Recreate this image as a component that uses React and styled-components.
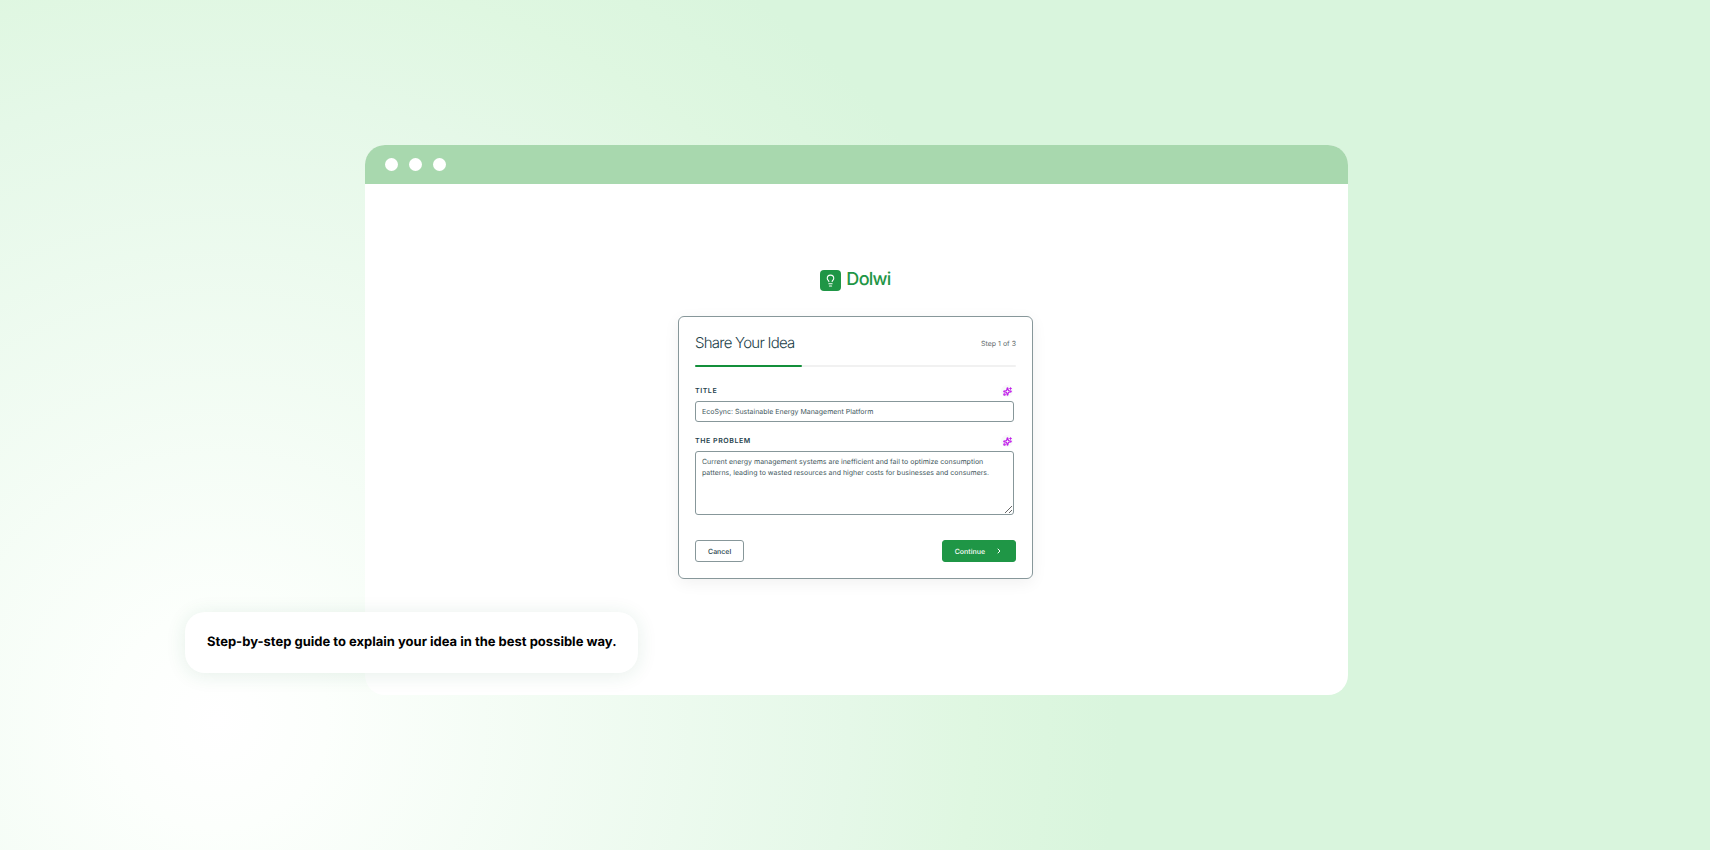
import { useState } from 'react';
import styled, { createGlobalStyle } from 'styled-components';
import { ChevronRight, Lightbulb, Sparkles } from 'lucide-react';

const GlobalStyle = createGlobalStyle`
  * {
    box-sizing: border-box;
  }

  body {
    margin: 0;
    font-family: Inter, 'Liberation Sans', sans-serif;
    text-rendering: geometricPrecision;
  }

  button,
  input,
  textarea {
    font-family: inherit;
    text-rendering: inherit;
  }
`;

const Page = styled.main`
  min-height: 100vh;
  display: flex;
  align-items: center;
  justify-content: center;
  padding: 0 0 10px 3px;
  background: radial-gradient(
    circle 900px at 218px 720px,
    #ffffff 0%,
    #fcfffc 12%,
    #e5f8e8 70%,
    #dff7e1 84%,
    #d9f5dd 100%
  );
`;

const BrowserWindow = styled.div`
  position: relative;
  width: 58%;
  max-width: 983px;
  min-width: 460px;
  border-radius: 20px;
  background: #ffffff;
`;

const TitleBar = styled.div`
  display: flex;
  align-items: center;
  gap: 11px;
  height: 39px;
  padding: 0 20px;
  border-radius: 20px 20px 0 0;
  background: #a8d8ae;
`;

const Dot = styled.span`
  width: 13px;
  height: 13px;
  border-radius: 50%;
  background: #ffffff;
`;

const Content = styled.div`
  display: flex;
  flex-direction: column;
  align-items: center;
  gap: 25px;
  padding: 85px 22px 116px 20px;
`;

const Logo = styled.div`
  display: flex;
  align-items: center;
  gap: 5px;
  color: #1f9646;
  font-size: 18px;
  font-weight: 500;
  line-height: 22px;
  letter-spacing: -0.04em;
`;

const LogoMark = styled.span`
  display: flex;
  align-items: center;
  justify-content: center;
  width: 21px;
  height: 21px;
  border-radius: 4px;
  background: #1f9646;
  color: #ffffff;
`;

const Card = styled.form`
  width: 355px;
  padding: 16px;
  border: 1px solid #87979a;
  border-radius: 6px;
  background: #ffffff;
  box-shadow: 0 4px 16px rgba(0, 0, 0, 0.06);
`;

const CardHeader = styled.div`
  display: flex;
  align-items: center;
  justify-content: space-between;
`;

const Heading = styled.h1`
  margin: 0;
  color: #24424a;
  font-size: 15px;
  font-weight: 300;
  line-height: 20px;
  letter-spacing: -0.05em;
`;

const StepCount = styled.span`
  color: #5f6b6e;
  font-size: 7px;
  line-height: 11px;
`;

const Track = styled.div`
  height: 2px;
  margin: 12px 0 18px;
  border-radius: 1px;
  background: #f1f1f1;
`;

const Progress = styled.div`
  height: 2px;
  border-radius: 1px;
  background: #138f3a;
`;

const Field = styled.div`
  margin-bottom: 13px;
  padding-right: 2px;
`;

const FieldHeader = styled.div`
  display: flex;
  align-items: center;
  justify-content: space-between;
  margin-bottom: 4px;
  padding-right: 1px;
`;

const Label = styled.label`
  color: #1f434d;
  font-size: 7px;
  font-weight: 600;
  line-height: 12px;
  letter-spacing: 0.08em;
  text-transform: uppercase;
`;

const SparkButton = styled.button`
  display: flex;
  align-items: center;
  justify-content: center;
  width: 12px;
  height: 12px;
  padding: 0;
  border: 0;
  border-radius: 50%;
  background: #f8faf9;
  color: #c01bea;
  cursor: pointer;
`;

const TextInput = styled.input`
  display: block;
  width: 100%;
  height: 21px;
  padding: 0 6px;
  border: 1px solid #87979a;
  border-radius: 3px;
  outline: none;
  background: #ffffff;
  color: #42575d;
  font-size: 7px;
`;

const TextArea = styled.textarea`
  display: block;
  width: 100%;
  height: 64px;
  padding: 4px 6px;
  border: 1px solid #87979a;
  border-radius: 3px;
  outline: none;
  background: #ffffff;
  color: #42575d;
  font-size: 7px;
  line-height: 11px;
  resize: vertical;
`;

const Actions = styled.div`
  display: flex;
  justify-content: space-between;
  padding-top: 12px;
`;

const Button = styled.button`
  display: flex;
  align-items: center;
  gap: 10px;
  height: 22px;
  padding: 0 12px;
  border: 1px solid ${({ $primary }) => ($primary ? '#1f9646' : '#87979a')};
  border-radius: 3px;
  background: ${({ $primary }) => ($primary ? '#1f9646' : '#ffffff')};
  color: ${({ $primary }) => ($primary ? '#ffffff' : '#24424a')};
  font-size: 7px;
  font-weight: 500;
  cursor: pointer;
`;

// Hangs over the lower left corner of the window
const Caption = styled.p`
  position: absolute;
  left: -180px;
  bottom: 22px;
  margin: 0;
  padding: 20px 22px;
  border-radius: 20px;
  background: #ffffff;
  box-shadow: 0 2px 20px rgba(31, 110, 60, 0.11);
  color: #000000;
  font-size: 13px;
  font-weight: 700;
  line-height: 21px;
  white-space: nowrap;
`;

function FieldTop({ id, children }) {
  return (
    <FieldHeader>
      <Label htmlFor={id}>{children}</Label>
      <SparkButton type="button" aria-label="Improve with AI">
        <Sparkles size={9} strokeWidth={3} />
      </SparkButton>
    </FieldHeader>
  );
}

export default function App() {
  const [title, setTitle] = useState(
    'EcoSync: Sustainable Energy Management Platform'
  );
  const [problem, setProblem] = useState(
    'Current energy management systems are inefficient and fail to optimize consumption patterns, leading to wasted resources and higher costs for businesses and consumers.'
  );
  const step = 1;
  const steps = 3;

  return (
    <>
      <GlobalStyle />
      <Page>
        <BrowserWindow>
          <TitleBar>
            <Dot />
            <Dot />
            <Dot />
          </TitleBar>
          <Content>
            <Logo>
              <LogoMark>
                <Lightbulb size={13} strokeWidth={2} />
              </LogoMark>
              Dolwi
            </Logo>
            <Card onSubmit={(e) => e.preventDefault()}>
              <CardHeader>
                <Heading>Share Your Idea</Heading>
                <StepCount>
                  Step {step} of {steps}
                </StepCount>
              </CardHeader>
              <Track>
                <Progress style={{ width: `${(step / steps) * 100}%` }} />
              </Track>
              <Field>
                <FieldTop id="title">Title</FieldTop>
                <TextInput
                  id="title"
                  value={title}
                  onChange={(e) => setTitle(e.target.value)}
                />
              </Field>
              <Field>
                <FieldTop id="problem">The problem</FieldTop>
                <TextArea
                  id="problem"
                  value={problem}
                  onChange={(e) => setProblem(e.target.value)}
                />
              </Field>
              <Actions>
                <Button type="button">Cancel</Button>
                <Button type="submit" $primary>
                  Continue
                  <ChevronRight size={8} strokeWidth={3} />
                </Button>
              </Actions>
            </Card>
          </Content>
          <Caption>
            Step-by-step guide to explain your idea in the best possible way.
          </Caption>
        </BrowserWindow>
      </Page>
    </>
  );
}
